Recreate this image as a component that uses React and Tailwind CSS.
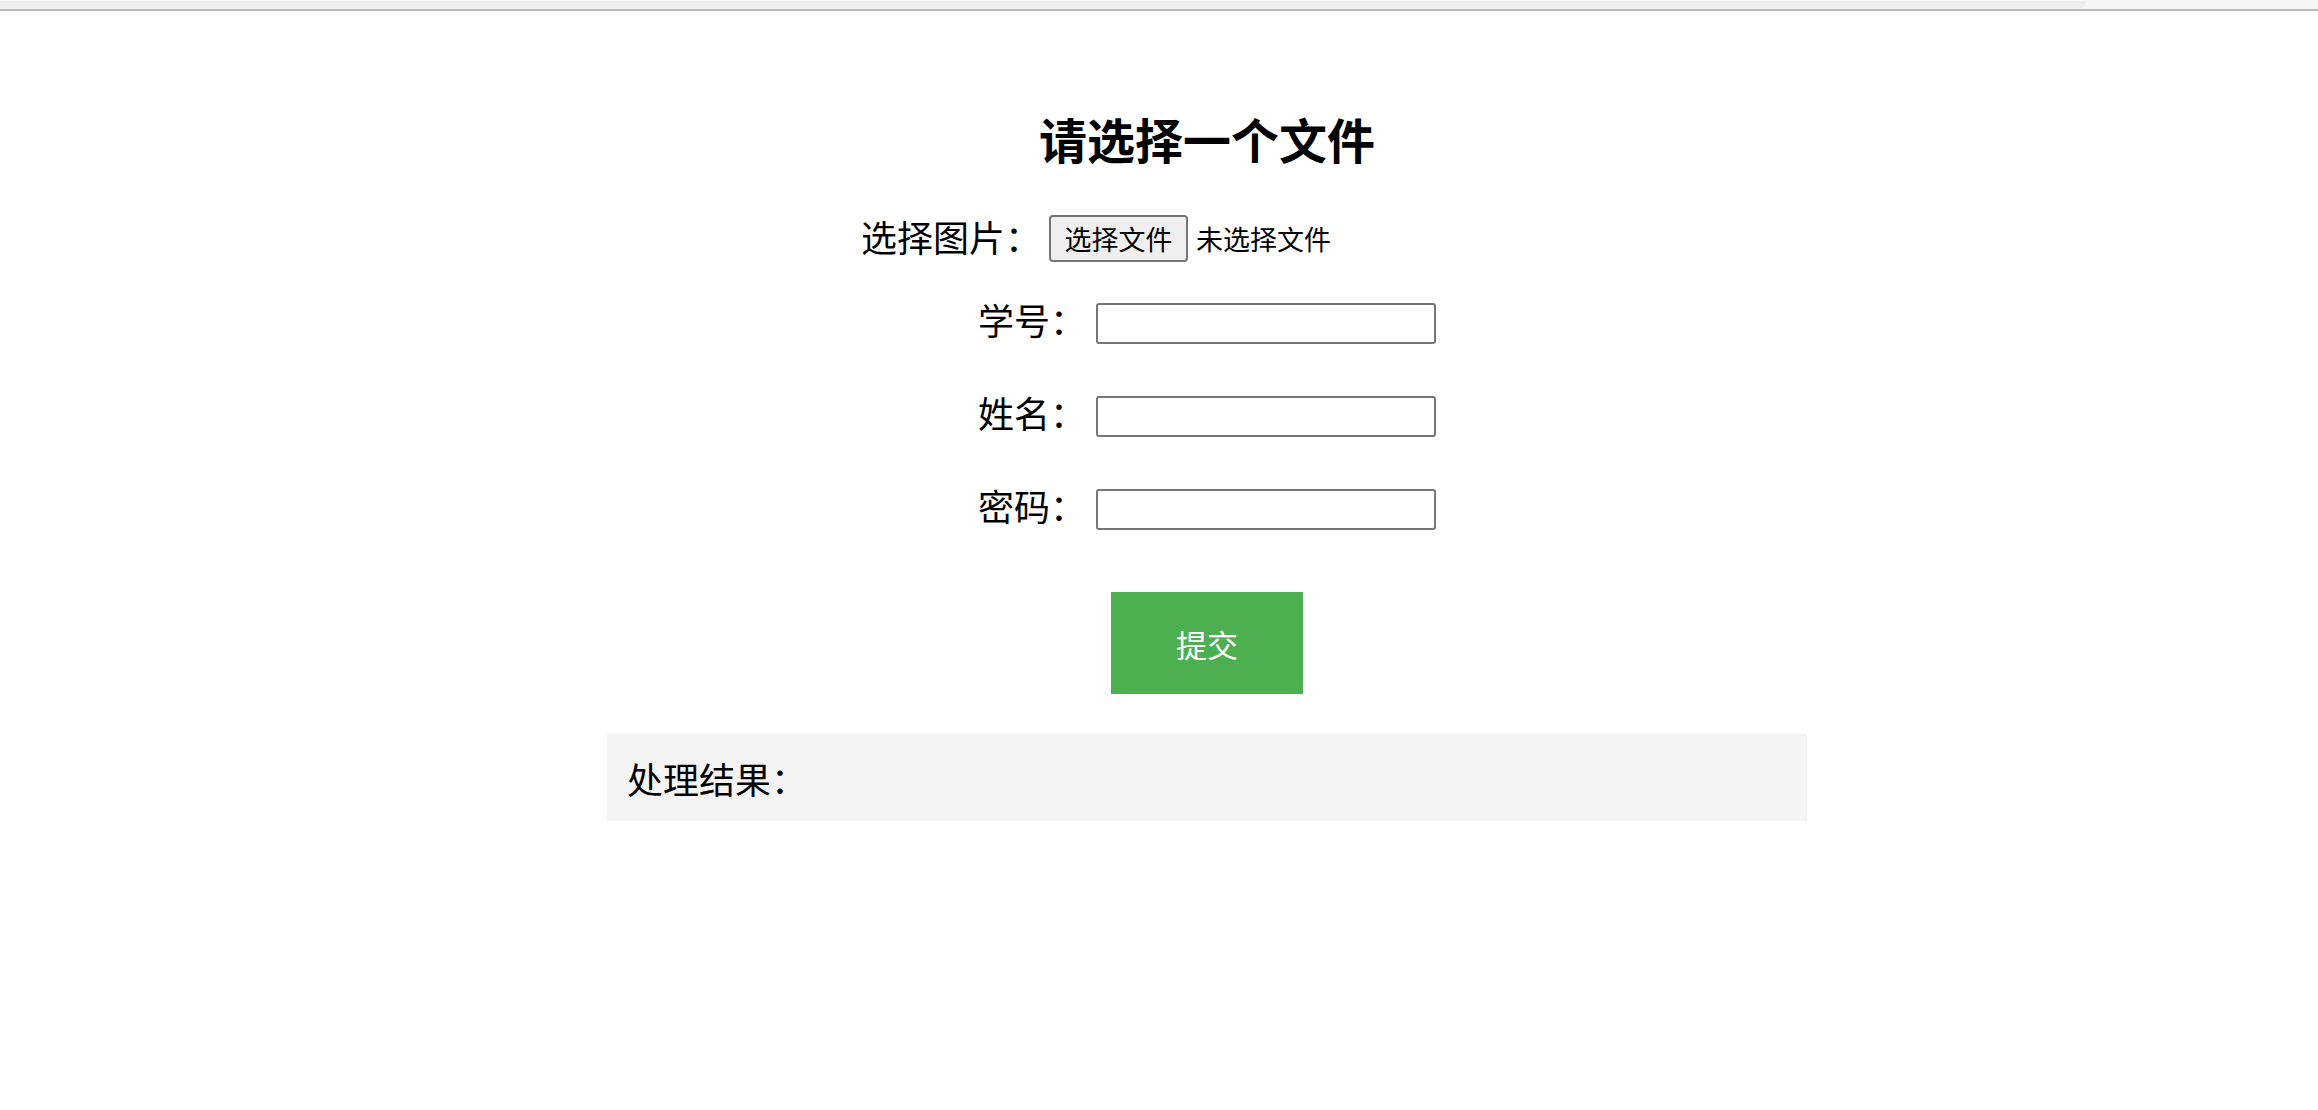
import React from "react";

const cjk = { fontFamily: '"Microsoft YaHei", "Noto Sans CJK SC", "Noto Sans", sans-serif' };

function TextRow({ label, type = "text" }) {
  return (
    <div className="flex justify-center items-center h-[41px]">
      <span className="w-[108px] pb-[10px] text-[36px] leading-[36px] text-black whitespace-nowrap">{label}</span>
      <input
        type={type}
        className="ml-[10px] w-[340px] h-[41px] bg-white border-2 border-[#767676] rounded-[3px] outline-none px-[3px] text-[20px]"
      />
    </div>
  );
}

export default function App() {
  return (
    <div className="min-h-[1110px] bg-white" style={cjk}>
      <div className="h-[11px] bg-[#f6f6f6] border-b-2 border-[#bcbcbc] flex">
        <div className="w-[2085px] mt-[1px] h-[8px] bg-[#efefef] rounded-br-[6px]" />
      </div>
      <div className="ml-[607px] w-[1200px] flex flex-col">
        <h1 className="mt-[103px] text-center text-[48px] leading-[48px] font-bold text-black">请选择一个文件</h1>
        <div className="mt-[52px] flex justify-center items-center h-[48px]">
          <span className="pb-[5px] text-[36px] leading-[36px] text-black whitespace-nowrap">选择图片：</span>
          <div className="ml-[8px] w-[504px] flex items-center">
            <button
              type="button"
              className="w-[139px] h-[47px] bg-[#efefef] border-2 border-[#767676] rounded-[4px] text-[27px] leading-[27px] text-black flex items-center justify-center whitespace-nowrap"
            >
              选择文件
            </button>
            <span className="ml-[8px] text-[27px] leading-[27px] text-black whitespace-nowrap">未选择文件</span>
          </div>
        </div>
        <div className="mt-[41px] flex flex-col gap-[52px]">
          <TextRow label="学号：" />
          <TextRow label="姓名：" />
          <TextRow label="密码：" type="password" />
        </div>
        <div className="mt-[62px] flex justify-center">
          <button
            type="button"
            className="w-[192px] h-[102px] bg-[#4caf50] text-white text-[31px] leading-[31px] flex items-center justify-center"
          >
            提交
          </button>
        </div>
        <div className="mt-[40px] h-[87px] bg-[#f4f4f4] flex items-center pl-[20px]">
          <span className="text-[36px] leading-[36px] text-black">处理结果：</span>
        </div>
      </div>
    </div>
  );
}
